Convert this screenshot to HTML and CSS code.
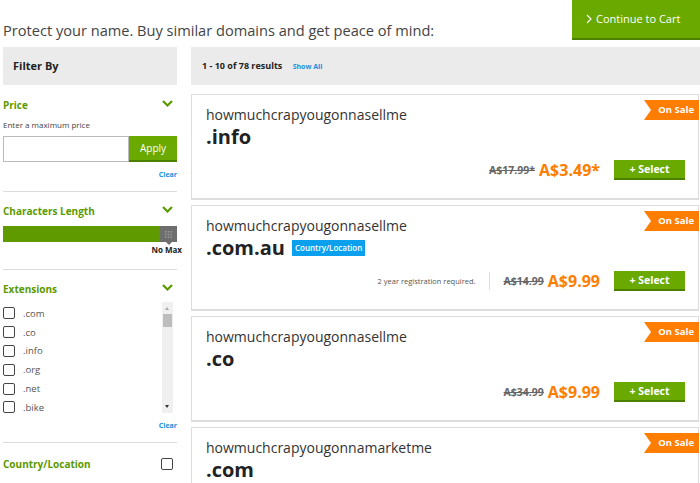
FILE: index.html
```html
<!DOCTYPE html>
<html lang="en">
<head>
    <meta charset="UTF-8" />
    <title>Similar Domains</title>
    <link rel="stylesheet" href="styles.css">
</head>
<body>
    <div class="topbar">
        <h2 class="intro">Protect your name. Buy similar domains and get peace of mind:</h2>
        <a href="#" class="cart-btn"><svg class="caret" width="6" height="10" viewBox="0 0 6 10"><path d="M1 1l4 4-4 4" fill="none" stroke="white" stroke-width="1.2"/></svg> Continue to Cart</a>
    </div>

    <div class="main">
        <!-- SIDEBAR -->
        <div class="sidebar">
            <div class="side-head">Filter By</div>

            <div class="filter price">
                <div class="filter-title">Price <span class="chev"><svg width="11" height="7" viewBox="0 0 11 7"><path d="M1 1l4.5 4.5L10 1" fill="none" stroke="#5a9a00" stroke-width="2.2"/></svg></span></div>
                <p class="hint">Enter a maximum price</p>
                <div class="price-form">
                    <input type="text">
                    <button>Apply</button>
                </div>
                <a href="#" class="clear">Clear</a>
            </div>

            <div class="filter">
                <div class="filter-title">Characters Length <span class="chev"><svg width="11" height="7" viewBox="0 0 11 7"><path d="M1 1l4.5 4.5L10 1" fill="none" stroke="#5a9a00" stroke-width="2.2"/></svg></span></div>
                <div class="slider">
                    <div class="slider-fill"></div>
                    <div class="slider-handle"><svg width="7" height="7" viewBox="0 0 7 7" fill="#999"><rect x="0" y="0" width="1.5" height="1.5"/><rect x="2.7" y="0" width="1.5" height="1.5"/><rect x="5.4" y="0" width="1.5" height="1.5"/><rect x="0" y="2.7" width="1.5" height="1.5"/><rect x="2.7" y="2.7" width="1.5" height="1.5"/><rect x="5.4" y="2.7" width="1.5" height="1.5"/><rect x="0" y="5.4" width="1.5" height="1.5"/><rect x="2.7" y="5.4" width="1.5" height="1.5"/><rect x="5.4" y="5.4" width="1.5" height="1.5"/></svg></div>
                </div>
                <div class="nomax">No Max</div>
            </div>

            <div class="filter ext">
                <div class="filter-title">Extensions <span class="chev"><svg width="11" height="7" viewBox="0 0 11 7"><path d="M1 1l4.5 4.5L10 1" fill="none" stroke="#5a9a00" stroke-width="2.2"/></svg></span></div>
                <div class="ext-box">
                    <ul class="ext-list">
                        <li><span class="box"></span>.com</li>
                        <li><span class="box"></span>.co</li>
                        <li><span class="box"></span>.info</li>
                        <li><span class="box"></span>.org</li>
                        <li><span class="box"></span>.net</li>
                        <li><span class="box"></span>.bike</li>
                    </ul>
                    <div class="scrollbar">
                        <span class="arrow-up"></span>
                        <span class="thumb"></span>
                        <span class="arrow-down"></span>
                    </div>
                </div>
                <a href="#" class="clear">Clear</a>
            </div>

            <div class="filter last">
                <div class="filter-title">Country/Location <span class="box"></span></div>
            </div>
        </div>

        <!-- RESULTS -->
        <div class="results">
            <div class="results-head">1 - 10 of 78 results <a href="#">Show All</a></div>

            <div class="card">
                <span class="sale">On Sale</span>
                <div class="name">howmuchcrapyougonnasellme</div>
                <div class="tld">.info</div>
                <div class="buy">
                    <span class="old">A$17.99*</span>
                    <span class="now">A$3.49*</span>
                    <button class="select">+ Select</button>
                </div>
            </div>

            <div class="card">
                <span class="sale">On Sale</span>
                <div class="name">howmuchcrapyougonnasellme</div>
                <div class="tld">.com.au <span class="tag">Country/Location</span></div>
                <div class="buy">
                    <span class="note">2 year registration required.</span>
                    <span class="old">A$14.99</span>
                    <span class="now">A$9.99</span>
                    <button class="select">+ Select</button>
                </div>
            </div>

            <div class="card">
                <span class="sale">On Sale</span>
                <div class="name">howmuchcrapyougonnasellme</div>
                <div class="tld">.co</div>
                <div class="buy">
                    <span class="old">A$34.99</span>
                    <span class="now">A$9.99</span>
                    <button class="select">+ Select</button>
                </div>
            </div>

            <div class="card partial">
                <span class="sale">On Sale</span>
                <div class="name">howmuchcrapyougonnamarketme</div>
                <div class="tld">.com</div>
            </div>
        </div>
    </div>
</body>
</html>
```

FILE: styles.css
```css
* {
    margin: 0;
    padding: 0;
    box-sizing: border-box;
    font-family: 'Open Sans', 'Liberation Sans', sans-serif;
}

body {
    background: white;
    color: #333;
    overflow: hidden;
}

.topbar {
    display: flex;
    justify-content: space-between;
    align-items: flex-start;
    height: 47px;
}

.intro {
    font-weight: normal;
    font-size: 14.6px;
    color: #444;
    padding: 20px 0 0 3px;
}

.cart-btn {
    display: flex;
    align-items: center;
    width: 128px;
    height: 40px;
    background: #6aaa00;
    border-bottom: 2px solid #4d8000;
    color: white;
    text-decoration: none;
    font-size: 11px;
    padding: 0 0 1px 14px;
}

.caret {
    margin-right: 4px;
}

.main {
    display: flex;
    gap: 14px;
    padding-left: 3px;
}

/* SIDEBAR */
.sidebar {
    width: 174px;
    flex-shrink: 0;
}

.side-head, .results-head {
    background: #ebebeb;
    height: 38px;
    font-size: 11px;
    font-weight: bold;
    color: #222;
    line-height: 38px;
}

.side-head {
    padding-left: 10px;
}

.filter {
    border-bottom: 1px solid #ddd;
    padding: 11px 0 0;
}

.filter.price {
    padding-top: 12px;
}

.filter-title {
    display: flex;
    justify-content: space-between;
    align-items: center;
    color: #5a9a00;
    font-size: 10px;
    font-weight: bold;
    height: 16px;
}

.chev {
    margin-right: 4px;
    margin-top: -4px;
}

.hint {
    font-size: 8px;
    color: #444;
    margin: 6px 0 6px;
}

.price-form {
    display: flex;
    height: 26px;
}

.price-form input {
    width: 126px;
    border: 1px solid #bbb;
    outline: none;
}

.price-form button {
    flex: 1;
    border: none;
    background: #6aaa00;
    border-bottom: 2px solid #4d8000;
    color: white;
    font-size: 10px;
}

.clear {
    display: block;
    text-align: right;
    color: #1a8fe0;
    font-size: 7px;
    font-weight: bold;
    text-decoration: none;
    margin: 8px 0 12px;
}

.slider {
    display: flex;
    height: 16px;
    margin-top: 7px;
}

.slider-fill {
    flex: 1;
    background: #5f9a00;
}

.slider-handle {
    width: 17px;
    background: #6e6e6e;
    display: flex;
    align-items: center;
    justify-content: center;
    position: relative;
}

.slider-handle::after {
    content: "";
    position: absolute;
    bottom: -3px;
    left: 6px;
    border-left: 3px solid transparent;
    border-right: 3px solid transparent;
    border-top: 3px solid #6e6e6e;
}

.nomax {
    text-align: right;
    font-size: 8px;
    font-weight: bold;
    color: #222;
    margin: 2px -5px 14px 0;
}

.filter.ext {
    padding-top: 11px;
}

.ext-box {
    display: flex;
    justify-content: space-between;
    margin-top: 5px;
    height: 111px;
}

.ext-list {
    list-style: none;
    padding-top: 2px;
}

.ext-list li {
    display: flex;
    align-items: center;
    gap: 8px;
    height: 18.8px;
    font-size: 9.5px;
    color: #555;
}

.box {
    display: inline-block;
    width: 12px;
    height: 12px;
    border: 1.5px solid #444;
    border-radius: 2px;
}

.scrollbar {
    width: 11px;
    margin-right: 4px;
    background: #f0f0f0;
    position: relative;
}

.thumb {
    position: absolute;
    left: 1px;
    top: 12px;
    width: 9px;
    height: 13px;
    background: #bdbdbd;
}

.arrow-up, .arrow-down {
    position: absolute;
    left: 3px;
    border-left: 2.5px solid transparent;
    border-right: 2.5px solid transparent;
}

.arrow-up {
    top: 5px;
    border-bottom: 3px solid #aaa;
}

.arrow-down {
    bottom: 5px;
    border-top: 3px solid #333;
}

.filter.last {
    border-bottom: none;
    padding-top: 13px;
}

.filter.last .box {
    margin-right: 4px;
}

/* RESULTS */
.results {
    flex: 1;
}

.results-head {
    padding-left: 11px;
    font-size: 9px;
    margin-bottom: 9px;
}

.results-head a {
    color: #1a8fe0;
    font-size: 7px;
    text-decoration: none;
    margin-left: 8px;
}

.card {
    position: relative;
    border: 1px solid #ddd;
    border-bottom-width: 2px;
    height: 106px;
    margin-bottom: 5px;
    margin-right: 1px;
    padding: 10px 0 0 14px;
}

.card.partial {
    height: 60px;
    border-bottom: none;
}

.sale {
    position: absolute;
    top: 5px;
    right: -1px;
    background: #ff7d00;
    color: white;
    font-size: 9.5px;
    font-weight: bold;
    height: 20px;
    line-height: 20px;
    padding: 0 5px 0 14px;
}

.sale::before {
    content: "";
    position: absolute;
    left: 0;
    top: 0;
    border-top: 10px solid transparent;
    border-bottom: 10px solid transparent;
    border-left: 7px solid white;
}

.name {
    font-size: 14px;
    color: #333;
    line-height: 20px;
}

.tld {
    font-size: 20px;
    font-weight: bold;
    color: #222;
    line-height: 28px;
    margin-top: -2px;
    display: flex;
    align-items: center;
}

.tag {
    background: #0aa0ee;
    color: white;
    font-size: 8px;
    font-weight: 600;
    padding: 0 3px;
    height: 16px;
    line-height: 16px;
    margin-left: 7px;
}

.buy {
    display: flex;
    justify-content: flex-end;
    align-items: center;
    margin: 8px 13px 0 0;
}

.note {
    font-size: 7.5px;
    color: #555;
    padding-right: 13px;
    margin-right: 14px;
    border-right: 1px solid #ddd;
    line-height: 18px;
}

.old {
    font-size: 10.5px;
    font-weight: bold;
    color: #666;
    text-decoration: line-through;
    margin-right: 4px;
}

.now {
    font-size: 16px;
    font-weight: bold;
    color: #ff7d00;
    margin-right: 14px;
}

.select {
    width: 71px;
    height: 20px;
    border: none;
    background: #6aaa00;
    border-bottom: 2px solid #4d8000;
    color: white;
    font-size: 10.5px;
    font-weight: bold;
}
```
